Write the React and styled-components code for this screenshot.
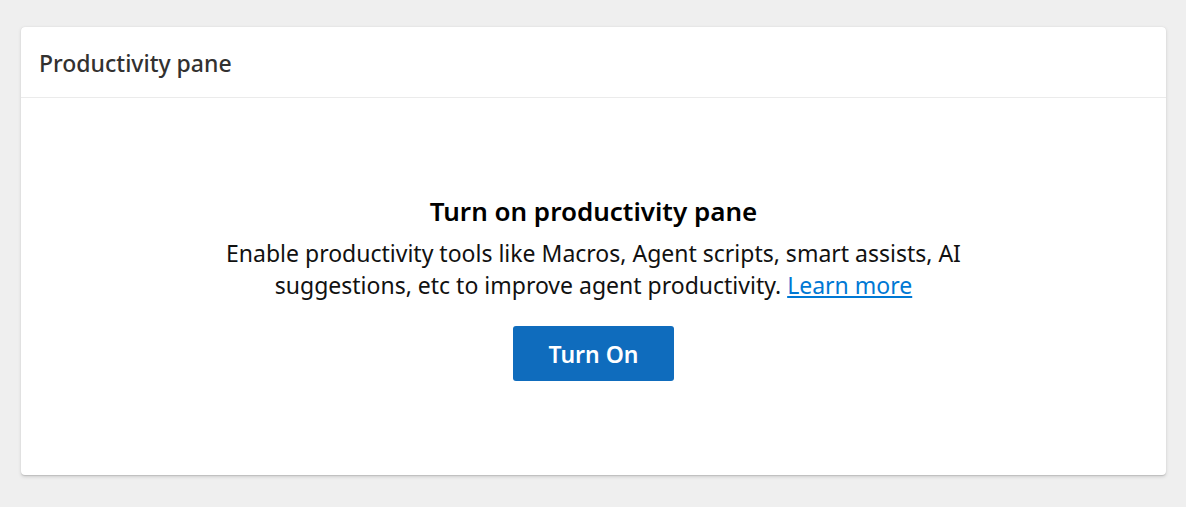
import React from "react";
import styled, { createGlobalStyle } from "styled-components";

const Global = createGlobalStyle`
  html, body { margin: 0; padding: 0; background: #efefef; }
  body { font-family: "Noto Sans", "Open Sans", sans-serif; }
`;

const Page = styled.div`
  padding: 27px 20px 32px 21px;
`;

const Card = styled.section`
  background: #fff;
  border-radius: 4px;
  box-shadow: 0 1.6px 3.6px rgba(0,0,0,0.13), 0 0.3px 0.9px rgba(0,0,0,0.11);
  height: 448px;
  display: flex;
  flex-direction: column;
`;

const Header = styled.header`
  height: 71px;
  box-sizing: border-box;
  border-bottom: 1px solid #ebebeb;
  display: flex;
  align-items: center;
  padding: 2px 18px 0;
`;

const Title = styled.h2`
  margin: 0;
  font-size: 23px;
  font-weight: 500;
  color: #323130;
`;

const Body = styled.div`
  flex: 1;
  display: flex;
  flex-direction: column;
  align-items: center;
  padding-top: 96px;
  text-align: center;
`;

const Heading = styled.h3`
  margin: 0;
  font-size: 26px;
  font-weight: 600;
  color: #000;
  line-height: 34px;
`;

const Text = styled.p`
  margin: 9px 0 0;
  font-size: 23px;
  line-height: 32px;
  color: #111;
  max-width: 770px;
`;

const Link = styled.a`
  color: #0078d4;
  text-decoration: underline;
`;

const Button = styled.button`
  margin-top: 25px;
  width: 161px;
  height: 55px;
  border: none;
  border-radius: 3px;
  background: #0f6cbd;
  color: #fff;
  font-family: inherit;
  font-size: 23px;
  font-weight: 600;
  cursor: pointer;
`;

export default function App() {
  return (
    <>
      <Global />
      <Page>
        <Card>
          <Header>
            <Title>Productivity pane</Title>
          </Header>
          <Body>
            <Heading>Turn on productivity pane</Heading>
            <Text>
              Enable productivity tools like Macros, Agent scripts, smart assists, AI suggestions, etc to improve agent productivity.{" "}
              <Link href="#">Learn more</Link>
            </Text>
            <Button>Turn On</Button>
          </Body>
        </Card>
      </Page>
    </>
  );
}
